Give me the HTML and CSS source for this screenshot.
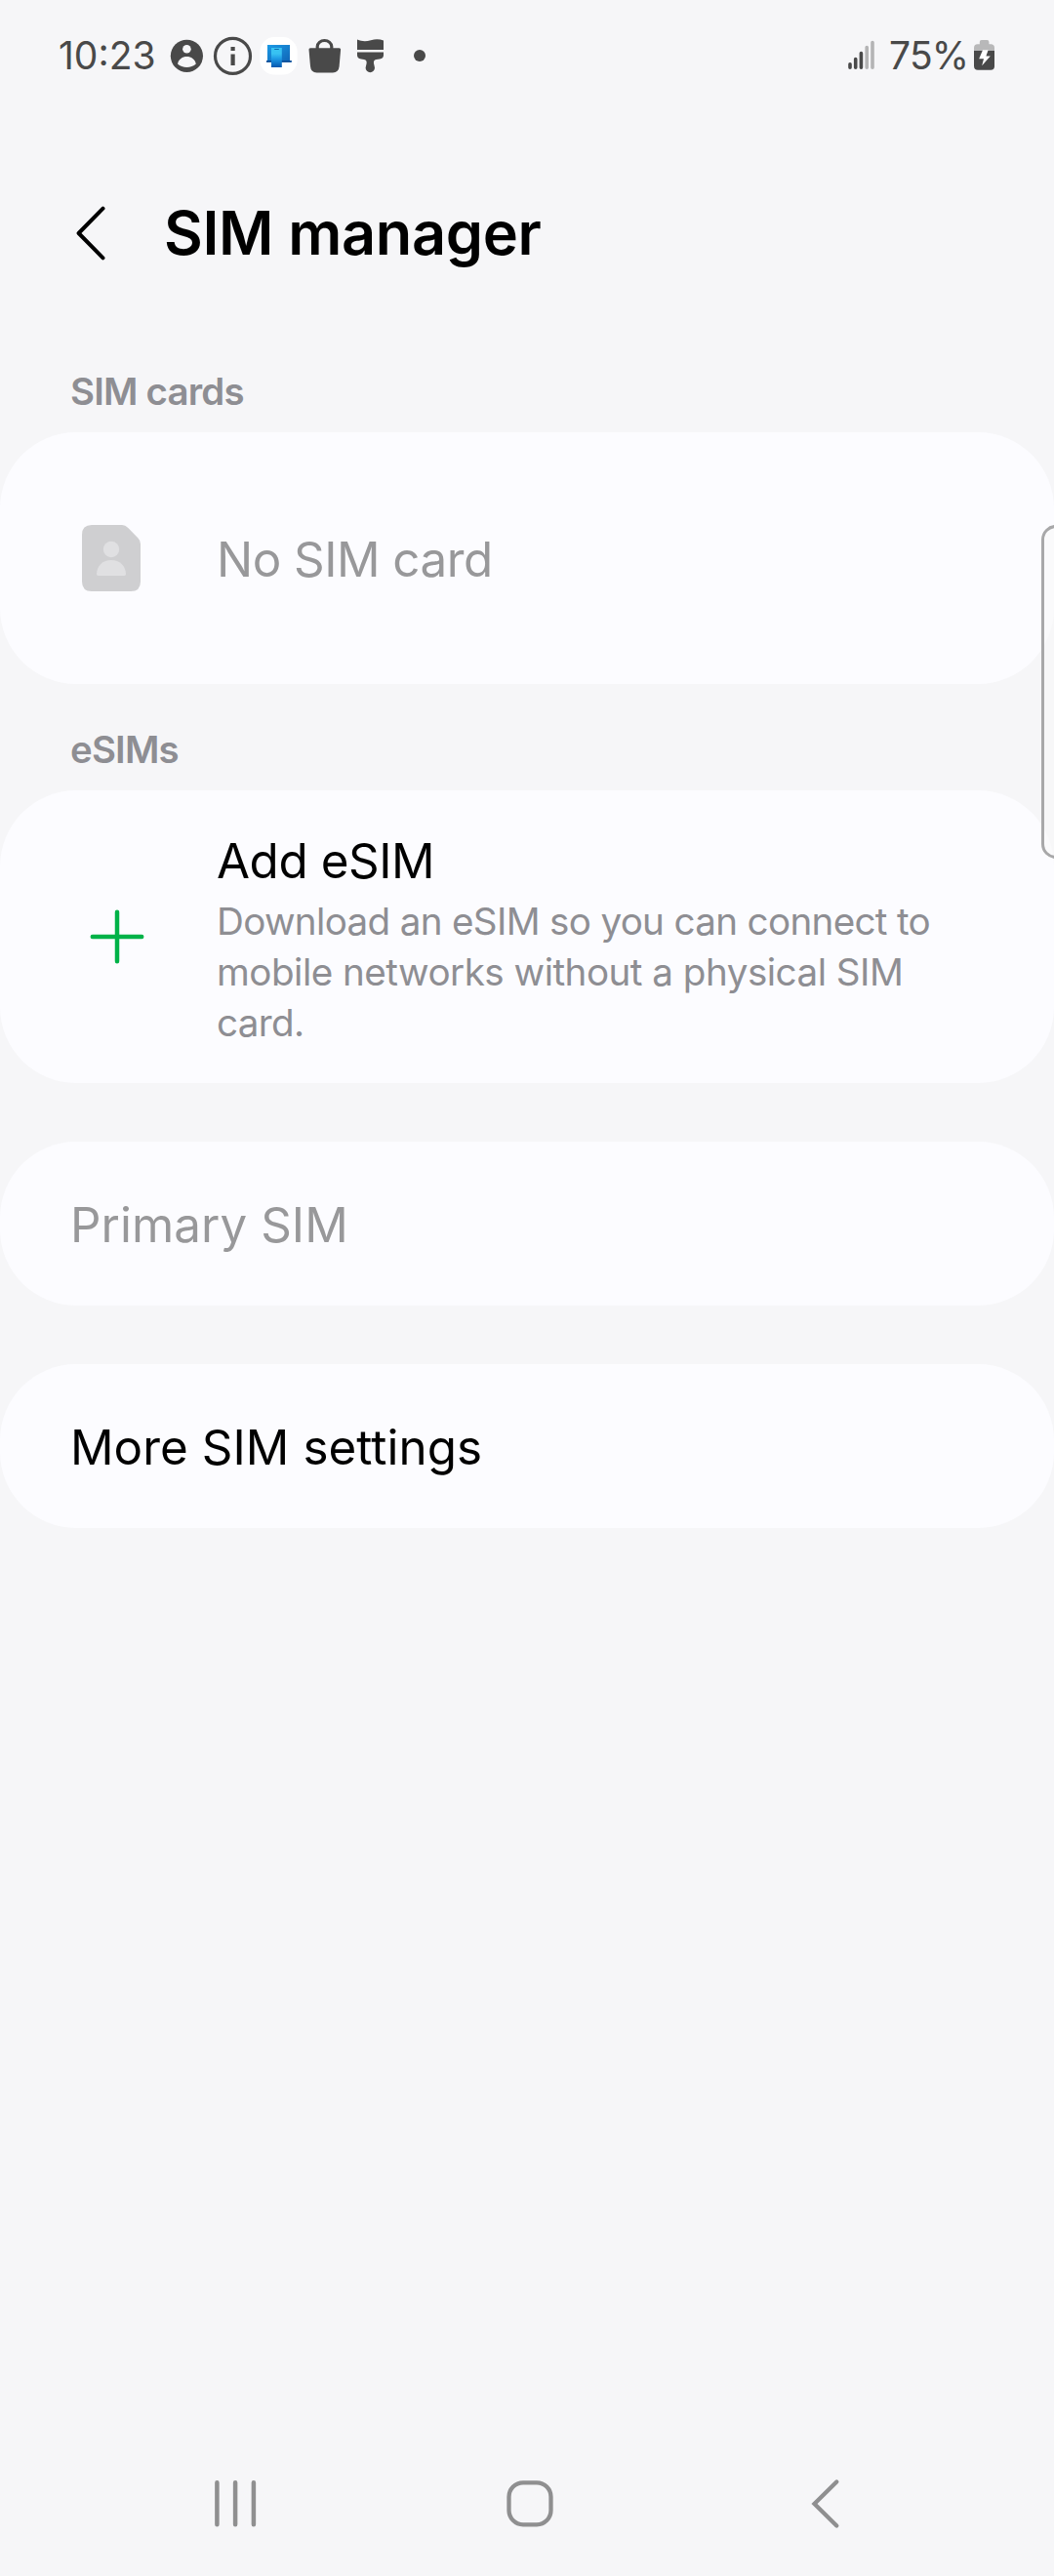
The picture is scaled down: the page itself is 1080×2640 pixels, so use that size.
FILE: index.html
```html
<!DOCTYPE html>
<html lang="en">
<head>
<meta charset="utf-8">
<title>SIM manager</title>
<link rel="stylesheet" href="styles.css">
</head>
<body>
<div class="screen">
  <div class="status-bar">
    <span class="clock">10:23</span>
    <svg class="notifications" width="276" height="48" viewBox="170 33 276 48" aria-hidden="true">
      <!-- account -->
      <circle cx="191.4" cy="57.3" r="16.6" fill="#494949"/>
      <circle cx="191.4" cy="50.2" r="4.3" fill="#f6f6f8"/>
      <path d="M182 65.6C183 60.600 187 58 191.400 58S199.800 60.600 200.800 65.600C198.500 68 195 69 191.400 69S184.300 68 182 65.600Z" fill="#f6f6f8"/>
      <!-- info -->
      <circle cx="238.5" cy="57.4" r="18" fill="none" stroke="#494949" stroke-width="3.2"/>
      <path d="M236.500 48h4.200v4h-4.200zM236.500 55.600h4.200v11.400h-4.200z" fill="#494949"/>
      <!-- linked computer -->
      <rect x="266.300" y="38" width="38.400" height="38.600" rx="15" fill="#fff"/>
      <path d="M274 46h23v16h1.600v1.800H273V62h1z" fill="url(#pc)"/>
      <path d="M273 62h25.700v1.800H273z" fill="#0d4f99"/>
      <path d="M278 49h10.800v20H278z" fill="url(#phone)"/>
      <path d="M281.200 50h4.600v.9h-4.600z" fill="#0b62a8"/>
      <!-- shopping bag -->
      <path d="M325.200 51v-3.200a7.300 6.300 0 0 1 14.600 0V51" fill="none" stroke="#494949" stroke-width="3.200"/>
      <path d="M318 49.200h29.600q1.600 0 1.500 1.600l-1.500 17.200q-.6 6.400-6.600 6.400h-16.400q-6 0-6.600-6.400l-1.500-17.200q-.1-1.600 1.500-1.600z" fill="#494949"/>
      <!-- brush -->
      <path d="M366 40.600C371 42.600 375 42.800 380 41.200S389 40 393 41.400V51H366zM366 53.400H393V56.600Q393 60 389 60.500L385.500 61C383 61.600 382.800 63.200 383 65L384 69.500A4.700 4.700 0 1 1 374.600 69.500L375.600 65C375.900 63.200 375.500 61.600 373 61L370 60.500Q366 60 366 56.600Z" fill="#494949"/>
      <circle cx="430" cy="57" r="6" fill="#494949"/>
      <defs>
        <linearGradient id="pc" x1="0" y1="0" x2="1" y2="1"><stop offset="0" stop-color="#1c9be6"/><stop offset="1" stop-color="#0f62b4"/></linearGradient>
        <linearGradient id="phone" x1="0" y1="0" x2="0" y2="1"><stop offset=".3" stop-color="#38c2f2"/><stop offset=".55" stop-color="#1f9be6"/><stop offset="1" stop-color="#0456ae"/></linearGradient>
      </defs>
    </svg>
    <svg class="signal" width="30" height="48" viewBox="869 33 30 48" aria-hidden="true">
      <g stroke-width="3.600" stroke-linecap="round" stroke="#494949">
        <path d="M872 65.800V69.300M877.700 60.500V69.300M883.400 54.600V69.300"/>
        <path d="M889.200 48.600V69.300M895 43.600V69.300" stroke="#b4b4b5"/>
      </g>
    </svg>
    <span class="battery-level">75%</span>
    <svg class="battery" width="22" height="48" viewBox="999 33 22 48" aria-hidden="true">
      <path d="M999 52.200V49q0-3.600 3.600-3.800h2.200V43q0-2 2-2h5.600q2 0 2 2v2.200h2q3.600.2 3.600 3.800v3.200z" fill="#b8b8b9"/>
      <path d="M999 52h21v15.800q0 4-4 4h-13q-4 0-4-4z" fill="#494949"/>
      <path d="M1008 51.200h5.600l-2.200 6.200h4.400l-8.600 9.800 1.800-7h-4.800z" fill="#fff"/>
    </svg>
  </div>

  <header class="header">
    <svg class="back" width="32" height="58" viewBox="77 209 32 58" role="img" aria-label="Back">
      <path d="M105.500 212.700L80.600 238L105.500 263.300" fill="none" stroke="#000" stroke-width="4" stroke-linecap="round" stroke-linejoin="round"/>
    </svg>
    <h1 class="title">SIM manager</h1>
  </header>

  <main>
    <h2 class="label">SIM cards</h2>
    <section class="card card-sim">
      <div class="icon-slot">
        <svg class="sim-icon" width="60" height="70" viewBox="0 0 60 70" aria-hidden="true">
          <path d="M10 1H41Q44.500 1 47 3.700L57.500 14.500Q60 17 60 20.500V59Q60 69 50 69H10Q0 69 0 59V11Q0 1 10 1Z" fill="#cfcfd1"/>
          <circle cx="30" cy="26" r="8.200" fill="#e0e0e2"/>
          <path d="M15 51.500C15 43 21.500 37 30 37S45 43 45 51.500Q45 53 43 53H17Q15 53 15 51.500Z" fill="#e0e0e2"/>
        </svg>
      </div>
      <div class="item-title disabled no-sim">No SIM card</div>
    </section>

    <h2 class="label">eSIMs</h2>
    <section class="card card-esim">
      <div class="icon-slot">
        <svg class="plus" width="56" height="56" viewBox="0 0 56 56" aria-hidden="true">
          <path d="M2.800 28H53.200M28 2.800V53.200" stroke="#00b248" stroke-width="4.500" stroke-linecap="round"/>
        </svg>
      </div>
      <div class="item-text">
        <div class="item-title add">Add eSIM</div>
        <p class="summary">Download an eSIM so you can connect to<br><span class="wide">mobile networks without a physical SIM</span><br>card.</p>
      </div>
    </section>

    <section class="card card-single"><div class="item-title disabled">Primary SIM</div></section>
    <section class="card card-single"><div class="item-title">More SIM settings</div></section>
  </main>

  <nav class="nav-bar">
    <svg width="44" height="50" viewBox="0 0 44 50" role="img" aria-label="Recents">
      <path d="M3.400 3.300V46.300M22.100 3.300V46.300M40.900 3.300V46.300" stroke="#8f8f90" stroke-width="4.500" stroke-linecap="round"/>
    </svg>
    <svg class="home" width="50" height="50" viewBox="0 0 50 50" role="img" aria-label="Home">
      <rect x="3.500" y="3.300" width="43" height="43" rx="14.500" fill="none" stroke="#8f8f90" stroke-width="4.300"/>
    </svg>
    <svg width="32" height="52" viewBox="0 0 32 52" role="img" aria-label="Back">
      <path d="M27.300 3.500L4.500 26L27.300 48.500" fill="none" stroke="#8f8f90" stroke-width="4.300" stroke-linecap="round" stroke-linejoin="miter"/>
    </svg>
  </nav>
  <div class="edge-handle"></div>
</div>
</body>
</html>
```
FILE: styles.css
```css
* {
  box-sizing: border-box;
}

body {
  margin: 0;
  background: #f6f6f8;
  color: #000;
  font-family: Inter, Roboto, sans-serif;
}

svg {
  display: block;
  flex: none;
}

h1,
h2,
p {
  margin: 0;
}

.screen {
  position: relative;
  display: flex;
  flex-direction: column;
  width: 1080px;
  height: 2640px;
  overflow: hidden;
}

.status-bar {
  display: flex;
  height: 114px;
  padding: 33px 60px 0 60px;
  font-size: 39px;
  line-height: 48px;
  color: #494949;
}

.clock {
  width: 110px;
}

.signal {
  margin-left: auto;
}

.battery-level {
  width: 87px;
  margin-left: 13px;
  letter-spacing: -0.8px;
}

.header {
  display: flex;
  align-items: center;
  gap: 59px;
  height: 220px;
  padding: 29px 72px 0 77px;
}

.title {
  font-size: 61.2px;
  line-height: 74px;
  font-weight: 600;
  letter-spacing: -0.33px;
}

.label {
  height: 109px;
  padding: 44px 72px 0;
  font-size: 38.4px;
  line-height: 46px;
  font-weight: 600;
  letter-spacing: -0.8px;
  color: #8e8e93;
}

.card {
  display: flex;
  align-items: center;
  background: #fcfcff;
  border-radius: 78px;
}

.card-sim {
  height: 258px;
}

.card-esim {
  height: 300px;
}

.card-single {
  height: 168px;
  margin-top: 60px;
  padding: 2px 72px 0;
}

.icon-slot {
  display: flex;
  flex: none;
  width: 222px;
}

.sim-icon {
  margin-left: 84px;
}

.plus {
  margin-left: 92px;
}

.item-title {
  font-size: 49.3px;
  line-height: 66px;
  letter-spacing: 0.08px;
}

.disabled {
  color: #98989a;
}

.no-sim {
  padding-top: 2px;
  letter-spacing: -0.5px;
}

.add {
  letter-spacing: -0.4px;
}

.item-text {
  padding-top: 3px;
}

.summary {
  margin-top: 3px;
  font-size: 38.6px;
  line-height: 52px;
  letter-spacing: -0.66px;
  color: #8e8e93;
}

.wide {
  letter-spacing: -0.5px;
}

.nav-bar {
  display: flex;
  align-items: center;
  justify-content: space-between;
  height: 148px;
  margin-top: auto;
  padding: 0 218px 0 219px;
}

.home {
  margin-right: 7px;
}

/* Edge panel handle, partly off the right side of the screen */
.edge-handle {
  position: absolute;
  top: 538px;
  right: -20px;
  width: 33px;
  height: 342px;
  border: 3px solid #a8a8a9;
  border-radius: 15px;
  background: rgba(248, 248, 248, 0.6);
}
```
